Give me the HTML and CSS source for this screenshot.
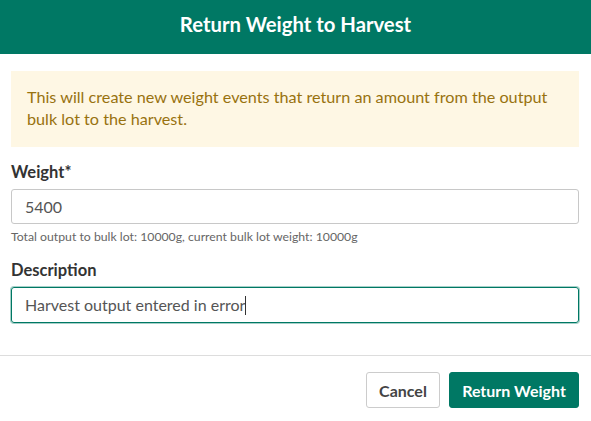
FILE: index.html
```html
<!DOCTYPE html>
<html>
<head>
<meta charset="utf-8">
<link rel="stylesheet" href="styles.css">
</head>
<body>
<div class="modal">
  <div class="modal-header">Return Weight to Harvest</div>
  <div class="modal-body">
    <div class="alert">This will create new weight events that return an amount from the output bulk lot to the harvest.</div>
    <div class="field">
      <label class="label">Weight*</label>
      <div class="input">5400</div>
      <div class="help">Total output to bulk lot: 10000g, current bulk lot weight: 10000g</div>
    </div>
    <div class="field">
      <label class="label">Description</label>
      <div class="input focused">Harvest output entered in error<span class="caret"></span></div>
    </div>
  </div>
  <div class="modal-footer">
    <button class="btn btn-default">Cancel</button>
    <button class="btn btn-primary">Return Weight</button>
  </div>
</div>
</body>
</html>
```

FILE: styles.css
```css
html, body {
  margin: 0;
  padding: 0;
  background: #fff;
}
body {
  font-family: Lato, "Open Sans", sans-serif;
  color: #333;
  width: 591px;
  height: 421px;
  overflow: hidden;
}
.modal-header {
  height: 54px;
  box-sizing: border-box;
  padding-top: 12px;
  background: #007864;
  color: #fff;
  font-weight: 700;
  font-size: 20.3px;
  line-height: 24px;
  text-align: center;
}
.modal-body {
  padding: 17px 12px 32px 11px;
}
.alert {
  background: #fef7e4;
  color: #98720f;
  font-size: 16.2px;
  line-height: 22px;
  padding: 15px 16px 17px 16px;
}
.field {
  margin-top: 15px;
  display: flex;
  flex-direction: column;
}
.field + .field {
  margin-top: 15px;
}
.label {
  font-weight: 700;
  font-size: 16.5px;
  line-height: 20px;
  color: #333;
  margin-bottom: 7px;
}
.input {
  height: 35px;
  box-sizing: border-box;
  border: 1px solid #c8c8c8;
  border-radius: 3px;
  padding: 0 13px;
  font-size: 16px;
  line-height: 33px;
  color: #555;
}
.input.focused {
  height: 36px;
  line-height: 34px;
  border-color: #007864;
  box-shadow: 0 0 0 1px rgba(0,120,100,0.35);
}
.caret {
  display: inline-block;
  width: 1px;
  height: 19px;
  background: #333;
  vertical-align: -4px;
}
.help {
  font-size: 12.25px;
  line-height: 17px;
  margin-top: 4px;
  color: #666;
}
.modal-footer {
  border-top: 1px solid #ddd;
  padding: 16px 12px 13px;
  display: flex;
  justify-content: flex-end;
  gap: 9px;
}
.btn {
  height: 36px;
  box-sizing: border-box;
  border-radius: 3px;
  font-family: Lato, "Open Sans", sans-serif;
  font-weight: 700;
  font-size: 16px;
  padding: 0 12px;
  cursor: pointer;
}
.btn-default {
  background: #fff;
  border: 1px solid #ccc;
  color: #444;
  width: 74px;
}
.btn-primary {
  background: #007864;
  border: 1px solid #007864;
  color: #fff;
  width: 130px;
}
```
